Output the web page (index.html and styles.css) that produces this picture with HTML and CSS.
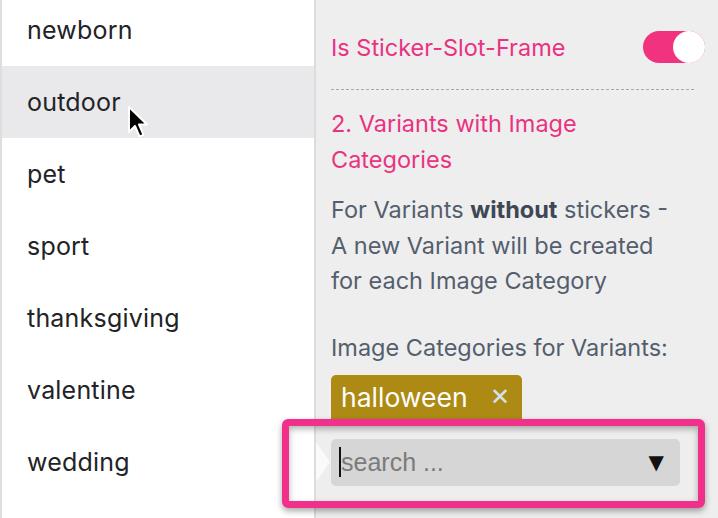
FILE: index.html
```html
<!DOCTYPE html>
<html lang="en">
<head>
    <meta charset="UTF-8">
    <meta name="viewport" content="width=device-width, initial-scale=1.0">
    <title>Image Categories</title>
    <link rel="stylesheet" href="styles.css">
</head>
<body>
    <div class="list">
        <div class="item">newborn</div>
        <div class="item hover">outdoor</div>
        <div class="item">pet</div>
        <div class="item">sport</div>
        <div class="item">thanksgiving</div>
        <div class="item">valentine</div>
        <div class="item">wedding</div>
    </div>
    <div class="panel">
        <div class="row">
            <span class="pink">Is Sticker-Slot-Frame</span>
            <span class="toggle"><span class="knob"></span></span>
        </div>
        <hr class="dashed">
        <h2 class="pink heading">2. Variants with Image Categories</h2>
        <p class="info">For Variants <strong>without</strong> stickers - A new Variant will be created for each Image Category</p>
        <p class="label">Image Categories for Variants:</p>
        <div class="tags">
            <span class="tag">halloween <span class="x">✕</span></span>
        </div>
        <div class="search">
            <span class="caret"></span>
            <span class="placeholder">search ...</span>
            <span class="arrow">▼</span>
        </div>
    </div>
    <span class="notch"></span>
    <div class="highlight"></div>
    <svg class="cursor" width="24" height="36" viewBox="0 0 24 36">
        <path d="M2 2 L2 27 L8 21 L12.5 31.5 L16.5 29.8 L12 19.5 L20 19.5 Z" fill="#000" stroke="#fff" stroke-width="2" stroke-linejoin="round"/>
    </svg>
</body>
</html>
```

FILE: styles.css
```css
body {
    margin: 0;
    width: 718px;
    height: 518px;
    overflow: hidden;
    display: flex;
    background-color: #eeeeee;
    font-family: Inter, "Open Sans", sans-serif;
    position: relative;
}
.list {
    width: 312px;
    flex: none;
    background-color: white;
    border-left: 2px solid #dedede;
    border-right: 2px solid #dcdcdc;
    margin-top: -6px;
}
.item {
    height: 72px;
    display: flex;
    align-items: center;
    padding-left: 25px;
    font-size: 25px;
    color: #222327;
    letter-spacing: 0.2px;
}
.item.hover {
    background-color: #e9e9eb;
}
.panel {
    flex: 1;
    padding: 0 13px 0 15px;
}
.pink {
    color: #e93382;
}
.row {
    display: flex;
    justify-content: space-between;
    align-items: center;
    margin-top: 31px;
    height: 32px;
    font-size: 23.5px;
}
.toggle {
    width: 62px;
    height: 32px;
    border-radius: 16px;
    background-color: #f0327f;
    display: flex;
    justify-content: flex-end;
}
.knob {
    width: 32px;
    height: 32px;
    border-radius: 50%;
    background-color: white;
}
.dashed {
    border: none;
    border-top: 1px dashed #a9a9a9;
    margin: 26px 11px 0 0;
}
.heading {
    font-size: 23.5px;
    font-weight: 400;
    line-height: 36px;
    margin: 16px 0 0;
    max-width: 360px;
}
.info {
    font-size: 23.5px;
    line-height: 35.5px;
    color: #545e6d;
    margin: 14px 0 0;
    max-width: 350px;
}
.info strong {
    color: #3f4754;
}
.label {
    font-size: 23.5px;
    line-height: 36px;
    color: #545e6d;
    margin: 31px 0 0;
}
.tags {
    margin-top: 9px;
}
.tag {
    display: inline-flex;
    align-items: center;
    gap: 22px;
    background-color: #ad8a14;
    color: white;
    font-size: 26.5px;
    height: 50px;
    padding: 0 12px 6px 10px;
    box-sizing: border-box;
    border-radius: 5px;
}
.tag .x {
    color: #d4e2ee;
    font-size: 24px;
}
.search {
    display: flex;
    align-items: center;
    height: 47px;
    width: 349px;
    margin-top: 14px;
    background-color: #d6d6d6;
    border-radius: 5px;
    box-sizing: border-box;
    padding: 0 16px 0 8px;
}
.caret {
    width: 2px;
    height: 30px;
    background-color: #111;
}
.placeholder {
    flex: 1;
    font-family: "Liberation Sans", Arial, sans-serif;
    font-size: 25px;
    color: #7b7b7b;
}
.arrow {
    font-family: "DejaVu Sans", sans-serif;
    font-size: 20px;
    color: #111;
}
.notch {
    position: absolute;
    left: 316px;
    top: 442px;
    border-top: 20px solid transparent;
    border-bottom: 20px solid transparent;
    border-left: 14px solid #fafafa;
}
.highlight {
    position: absolute;
    left: 282px;
    top: 419px;
    width: 423px;
    height: 89px;
    box-sizing: border-box;
    border: 7px solid #f0308a;
    border-radius: 6px;
    box-shadow: 0 3px 6px rgba(0, 0, 0, 0.35), inset 0 3px 6px rgba(0, 0, 0, 0.3);
}
.cursor {
    position: absolute;
    left: 127px;
    top: 105px;
}
```
